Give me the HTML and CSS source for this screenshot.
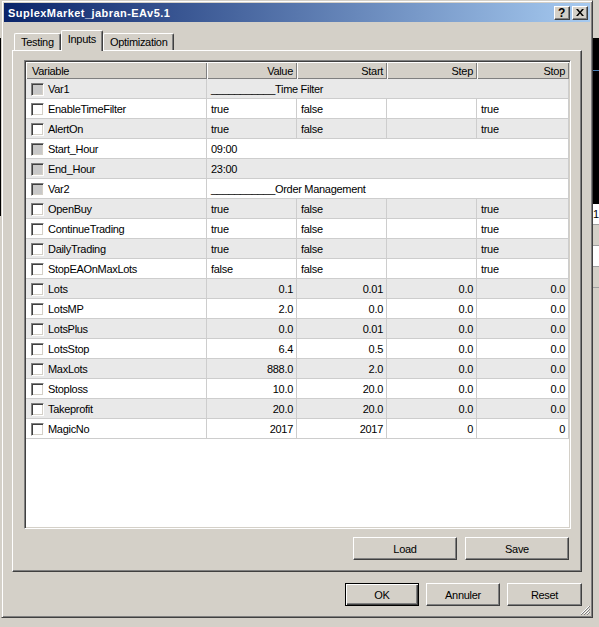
FILE: index.html
```html
<!DOCTYPE html>
<html lang="en">
<head>
  <meta charset="UTF-8" />
  <title>SuplexMarket_jabran-EAv5.1</title>
  <link rel="stylesheet" href="styles.css">
</head>
<body>
<div class="screen">
  <div class="edge-left"><div class="chart-dark"></div></div>

  <div class="dialog">
    <div class="titlebar">
      <span class="title">SuplexMarket_jabran-EAv5.1</span>
      <div class="title-btns">
        <span class="tbtn help">?</span>
        <span class="tbtn">
          <svg width="8" height="7" viewBox="0 0 8 7"><path d="M0 0h2l2 2.5L6 0h2L5 3.5 8 7H6L4 4.5 2 7H0l3-3.5z" fill="#000"/></svg>
        </span>
      </div>
    </div>

    <div class="tabs">
      <div class="tab">Testing</div>
      <div class="tab active">Inputs</div>
      <div class="tab">Optimization</div>
    </div>

    <div class="panel">
      <div class="list">
        <table class="params">
          <colgroup>
            <col style="width:181px"><col style="width:90px"><col style="width:90px"><col style="width:90px"><col style="width:92px">
          </colgroup>
          <thead>
            <tr><th class="name-h">Variable</th><th>Value</th><th>Start</th><th>Step</th><th>Stop</th></tr>
          </thead>
          <tbody>
            <tr class="odd"><td><span class="chk off"></span>Var1</td><td colspan="4" class="txt">___________Time Filter</td></tr>
            <tr><td><span class="chk"></span>EnableTimeFilter</td><td class="txt">true</td><td class="txt">false</td><td></td><td class="txt">true</td></tr>
            <tr class="odd"><td><span class="chk"></span>AlertOn</td><td class="txt">true</td><td class="txt">false</td><td></td><td class="txt">true</td></tr>
            <tr><td><span class="chk off"></span>Start_Hour</td><td colspan="4" class="txt">09:00</td></tr>
            <tr class="odd"><td><span class="chk off"></span>End_Hour</td><td colspan="4" class="txt">23:00</td></tr>
            <tr><td><span class="chk off"></span>Var2</td><td colspan="4" class="txt">___________Order Management</td></tr>
            <tr class="odd"><td><span class="chk"></span>OpenBuy</td><td class="txt">true</td><td class="txt">false</td><td></td><td class="txt">true</td></tr>
            <tr><td><span class="chk"></span>ContinueTrading</td><td class="txt">true</td><td class="txt">false</td><td></td><td class="txt">true</td></tr>
            <tr class="odd"><td><span class="chk"></span>DailyTrading</td><td class="txt">true</td><td class="txt">false</td><td></td><td class="txt">true</td></tr>
            <tr><td><span class="chk"></span>StopEAOnMaxLots</td><td class="txt">false</td><td class="txt">false</td><td></td><td class="txt">true</td></tr>
            <tr class="odd"><td><span class="chk"></span>Lots</td><td>0.1</td><td>0.01</td><td>0.0</td><td>0.0</td></tr>
            <tr><td><span class="chk"></span>LotsMP</td><td>2.0</td><td>0.0</td><td>0.0</td><td>0.0</td></tr>
            <tr class="odd"><td><span class="chk"></span>LotsPlus</td><td>0.0</td><td>0.01</td><td>0.0</td><td>0.0</td></tr>
            <tr><td><span class="chk"></span>LotsStop</td><td>6.4</td><td>0.5</td><td>0.0</td><td>0.0</td></tr>
            <tr class="odd"><td><span class="chk"></span>MaxLots</td><td>888.0</td><td>2.0</td><td>0.0</td><td>0.0</td></tr>
            <tr><td><span class="chk"></span>Stoploss</td><td>10.0</td><td>20.0</td><td>0.0</td><td>0.0</td></tr>
            <tr class="odd"><td><span class="chk"></span>Takeprofit</td><td>20.0</td><td>20.0</td><td>0.0</td><td>0.0</td></tr>
            <tr><td><span class="chk"></span>MagicNo</td><td>2017</td><td>2017</td><td>0</td><td>0</td></tr>
          </tbody>
        </table>
      </div>
      <div class="list-btns">
        <button class="btn wide">Load</button>
        <button class="btn wide">Save</button>
      </div>
    </div>

    <div class="dlg-btns">
      <button class="btn default">OK</button>
      <button class="btn">Annuler</button>
      <button class="btn reset">Reset</button>
    </div>

    <svg class="grip" width="10" height="10" viewBox="0 0 10 10">
      <path d="M9 1L1 9M9 4L4 9M9 7L7 9" stroke="#fff" stroke-width="1"/>
      <path d="M10 1L1 10M10 4L4 10M10 7L7 10" stroke="#808080" stroke-width="1"/>
    </svg>
  </div>

  <div class="edge-right">
    <div class="chart-dark"><div class="chart-line"></div></div>
    <div class="side-row">1</div>
    <div class="side-row grey"></div>
    <div class="side-row"></div>
    <div class="side-row grey"></div>
  </div>
</div>
</body>
</html>
```

FILE: styles.css
```css
body {
  margin: 0;
  background: #d4d0c8;
  font-family: "Liberation Sans", Arial, sans-serif;
  font-size: 11px;
  letter-spacing: -0.3px;
  color: #000;
}

.screen {
  display: flex;
  width: 599px;
  height: 627px;
  overflow: hidden;
  background: #d4d0c8;
}

.edge-left {
  width: 1px;
  padding-top: 38px;
}

.edge-left .chart-dark {
  height: 178px;
  background: #000;
}

.edge-right {
  width: 6px;
  padding-top: 38px;
}

.edge-right .chart-dark {
  height: 166px;
  background: #000;
  padding-top: 32px;
  box-sizing: border-box;
}

.chart-line {
  height: 1px;
  background: #4a7fb5;
}

.side-row {
  height: 20px;
  background: #fff;
  border-bottom: 1px solid #a0a0a0;
  font-size: 11px;
  line-height: 20px;
}

.side-row.grey {
  background: #d4d0c8;
}

/* dialog frame */
.dialog {
  position: relative;
  width: 592px;
  height: 618px;
  box-sizing: border-box;
  border: 1px solid;
  border-color: #d4d0c8 #404040 #404040 #d4d0c8;
  box-shadow: inset 1px 1px #fff, inset -1px -1px #808080;
  padding: 2px;
  background: #d4d0c8;
}

.titlebar {
  display: flex;
  align-items: center;
  justify-content: space-between;
  height: 19px;
  padding: 0 2px 0 4px;
  background: linear-gradient(to right, #0a246a, #a6caf0);
}

.title {
  color: #fff;
  font-weight: bold;
  letter-spacing: 0.45px;
}

.title-btns {
  display: flex;
  gap: 2px;
}

.tbtn {
  display: flex;
  align-items: center;
  justify-content: center;
  width: 16px;
  height: 14px;
  box-sizing: border-box;
  background: #d4d0c8;
  border: 1px solid;
  border-color: #fff #404040 #404040 #fff;
  box-shadow: inset -1px -1px #808080;
}

.tbtn.help {
  font-weight: bold;
  font-size: 12px;
  line-height: 12px;
  padding-right: 1px;
}

/* tabs */
.tabs {
  display: flex;
  align-items: flex-end;
  height: 20px;
  margin: 8px 0 0 10px;
  position: relative;
  z-index: 1;
}

.tab {
  height: 17px;
  box-sizing: border-box;
  padding: 2px 6px 0 6px;
  border-top: 1px solid #fff;
  border-left: 1px solid #fff;
  border-right: 1px solid #404040;
  box-shadow: inset -1px 0 #808080;
  border-radius: 2px 2px 0 0;
  background: #d4d0c8;
}

.tab.active {
  height: 21px;
  margin-bottom: -1px;
  padding-top: 2px;
}

/* tab page */
.panel {
  width: 570px;
  height: 522px;
  margin-left: 8px;
  box-sizing: border-box;
  border: 1px solid;
  border-color: #fff #404040 #404040 #fff;
  box-shadow: inset -1px -1px #808080;
  padding: 9px 0 0 11px;
}

.list {
  width: 547px;
  height: 469px;
  box-sizing: border-box;
  border: 1px solid;
  border-color: #808080 #fff #fff #808080;
  box-shadow: inset 1px 1px #404040, inset -1px -1px #d4d0c8;
  padding: 1px;
  background: #fff;
}

.params {
  table-layout: fixed;
  border-collapse: separate;
  border-spacing: 0;
  width: 543px;
}

.params th {
  height: 17px;
  padding: 0 4px;
  box-sizing: border-box;
  background: #d4d0c8;
  box-shadow: inset 1px 1px #fff, inset -1px -1px #808080;
  font-weight: normal;
  text-align: right;
}

.params th.name-h {
  text-align: left;
  padding-left: 6px;
}

.params td {
  height: 18px;
  padding: 1px 3px 0 0;
  border-right: 1px solid #cdcdcd;
  border-bottom: 1px solid #cdcdcd;
  text-align: right;
  white-space: nowrap;
  overflow: hidden;
}

.params td:first-child {
  text-align: left;
  padding-left: 5px;
}

.params td.txt {
  text-align: left;
  padding-left: 4px;
}

.params tr.odd td {
  background: #e9e9e9;
}

.chk {
  display: inline-block;
  width: 13px;
  height: 13px;
  box-sizing: border-box;
  margin-right: 4px;
  vertical-align: -3px;
  background: #fff;
  border: 1px solid;
  border-color: #808080 #fff #fff #808080;
  box-shadow: inset 1px 1px #404040, inset -1px -1px #d4d0c8;
}

.chk.off {
  background: #c8c8c8;
}

/* buttons */
.list-btns {
  display: flex;
  justify-content: flex-end;
  gap: 8px;
  width: 545px;
  margin-top: 8px;
}

.btn {
  width: 74px;
  height: 23px;
  box-sizing: border-box;
  background: #d4d0c8;
  border: 1px solid;
  border-color: #fff #404040 #404040 #fff;
  box-shadow: inset -1px -1px #808080;
  font-family: inherit;
  font-size: 11px;
  letter-spacing: -0.3px;
  color: #000;
  padding: 0;
}

.btn.wide {
  width: 104px;
}

.btn.reset {
  width: 75px;
}

.btn.default {
  border-color: #000;
  box-shadow: inset 1px 1px #fff, inset -1px -1px #404040, inset -2px -2px #808080;
}

.dlg-btns {
  display: flex;
  justify-content: flex-end;
  gap: 7px;
  margin: 11px 8px 0 0;
}

.grip {
  position: absolute;
  right: 2px;
  bottom: 2px;
}
```
